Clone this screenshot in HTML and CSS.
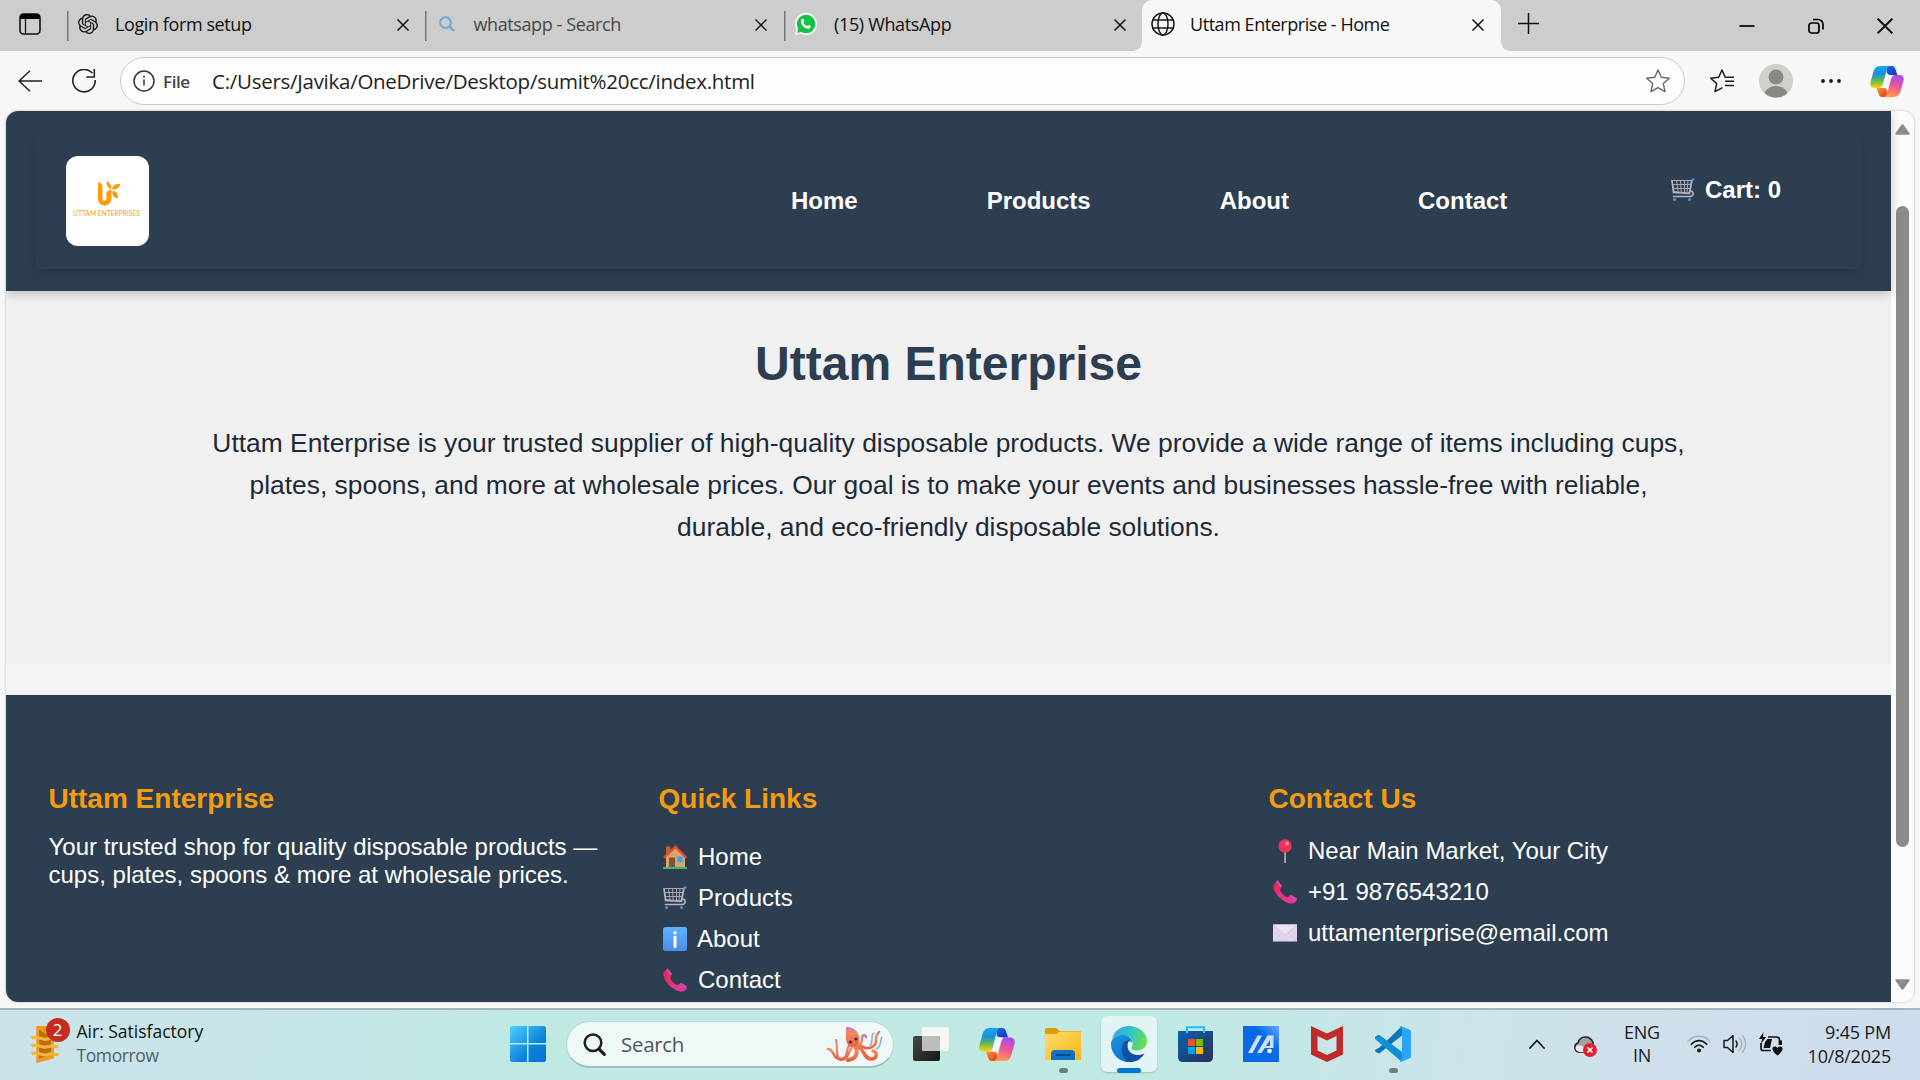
FILE: index.html
```html
<!DOCTYPE html>
<html lang="en">
<head>
<meta charset="utf-8">
<title>Uttam Enterprise - Home</title>
<link rel="stylesheet" href="styles.css">
</head>
<body>
<svg class="defs" width="0" height="0">
  <defs>
    <linearGradient id="cpBlue" x1="0" y1="0" x2="0" y2="1"><stop offset="0" stop-color="#1ba4f0"/><stop offset=".35" stop-color="#1a8fe0"/><stop offset=".65" stop-color="#5cb85c"/><stop offset="1" stop-color="#ffd500"/></linearGradient>
    <linearGradient id="cpPink" x1=".6" y1="0" x2=".3" y2="1"><stop offset="0" stop-color="#a64bf0"/><stop offset=".5" stop-color="#f2588f"/><stop offset="1" stop-color="#ffa34d"/></linearGradient>
    <linearGradient id="cpNavy" x1="0" y1="0" x2="1" y2="1"><stop offset="0" stop-color="#1b6fe0"/><stop offset="1" stop-color="#1230c0"/></linearGradient>
    <linearGradient id="cpRed" x1="0" y1="0" x2="1" y2="1"><stop offset="0" stop-color="#ff9a2e"/><stop offset="1" stop-color="#e0352b"/></linearGradient>
    <linearGradient id="win" x1="0" y1="0" x2="1" y2="1"><stop offset="0" stop-color="#4fd0ff"/><stop offset=".6" stop-color="#0f84dc"/><stop offset="1" stop-color="#0070d0"/></linearGradient>
    <linearGradient id="folder" x1="0" y1="0" x2="1" y2="1"><stop offset="0" stop-color="#ffdc70"/><stop offset="1" stop-color="#fbb612"/></linearGradient>
    <linearGradient id="edgeTop" x1="0" y1=".3" x2="1" y2=".6"><stop offset="0" stop-color="#2ea8e8"/><stop offset=".5" stop-color="#35c5c5"/><stop offset="1" stop-color="#6be04a"/></linearGradient>
    <linearGradient id="edgeLeft" x1="0" y1="0" x2=".6" y2="1"><stop offset="0" stop-color="#1797dd"/><stop offset="1" stop-color="#0a6fd0"/></linearGradient>
    <linearGradient id="store" x1="0" y1="0" x2="1" y2="1"><stop offset="0" stop-color="#0a63b5"/><stop offset="1" stop-color="#2a2f50"/></linearGradient>
    <linearGradient id="asus" x1="0" y1="1" x2="1" y2="0"><stop offset="0" stop-color="#0a6ae6"/><stop offset=".65" stop-color="#0a6ae6"/><stop offset="1" stop-color="#6aa8ff"/></linearGradient>
    <linearGradient id="tvDark" x1="0" y1="0" x2="1" y2="1"><stop offset="0" stop-color="#4a4a48"/><stop offset="1" stop-color="#161616"/></linearGradient>
    <linearGradient id="octo" x1="0" y1="0" x2="0" y2="1"><stop offset="0" stop-color="#c07bc0"/><stop offset=".3" stop-color="#f58a60"/><stop offset="1" stop-color="#e8603c"/></linearGradient>
    <linearGradient id="phoneFill" x1="0" y1="0" x2="1" y2="1"><stop offset="0" stop-color="#e8254a"/><stop offset="1" stop-color="#ea3cab"/></linearGradient>
    <linearGradient id="infoFill" x1="0" y1="0" x2="0" y2="1"><stop offset="0" stop-color="#5cb2ff"/><stop offset="1" stop-color="#4b8ee8"/></linearGradient>
    <symbol id="close" viewBox="0 0 12 12"><path d="M.5.5l11 11M11.500.5l-11 11" fill="none" stroke="#111" stroke-width="1.5"/></symbol>
    <symbol id="copilot" viewBox="0 0 36 33">
      <path d="M18 0h5c2.500 0 3.500 1.600 4.200 4l1.800 5.500h-7.500c-2.500 0-3.500-1.500-4-4z" fill="url(#cpNavy)"/>
      <path d="M18 33h-5c-2.500 0-3.500-1.600-4.200-4L7 23.500h7.500c2.500 0 3.500 1.500 4 4z" fill="url(#cpRed)"/>
      <path d="M11 0h11c-2.400 0-3.600 1.800-4.300 4.200l-4 15c-.8 2.600-2 4.300-4.700 4.300H5c-4 0-5.500-2.700-4.500-6.500l3.200-11.500C4.700 2 7 0 11 0z" fill="url(#cpBlue)"/>
      <path d="M25 33H14c2.400 0 3.600-1.800 4.300-4.200l4-15c.8-2.600 2-4.300 4.700-4.300H31c4 0 5.500 2.700 4.500 6.500l-3.200 11.500C31.300 31 29 33 25 33z" fill="url(#cpPink)"/>
      <path d="M16.400 9.500H24c-1.300.8-1.900 2.500-2.500 4.500l-2.700 9.500H12c1.300-.8 1.900-2.300 2.300-4z" fill="#f3f8fa"/>
    </symbol>
    <symbol id="cart" viewBox="0 0 24 24">
      <path d="M1.500 2.500h19M1 3l2 10.500L18.500 15M20.500 2.500L18 15M2 6.500h17.500M2.600 10.500H19M5.500 2.500l1.500 11M9.500 2.500l.7 11.300M13.500 2.500v11.700M17 2.500l-1 12" fill="none" stroke="#aaa7b2" stroke-width="1"/>
      <path d="M1 2.500l1.500 12 16 1L21 2M19 13c4-.5 4.500 5.500 0 5.500H2.500" fill="none" stroke="#b9b3c2" stroke-width="1.600" stroke-linecap="round"/>
      <path d="M21 1.500h2.500" stroke="#4b8fe0" stroke-width="2"/><circle cx="3.500" cy="21.500" r="1.500" fill="#4b8fe0"/><circle cx="18.500" cy="21.500" r="1.500" fill="#4b8fe0"/>
    </symbol>
    <symbol id="phone" viewBox="0 0 24 24">
      <path d="M.5 4.500L4.500.3 9 6c-.5 2-2.200 2.500-1.600 4.500 1 2.500 4 5.500 6.400 6.500 2 .4 2.500-1.200 4.400-2L23.700 18.500c.8 3-3 5.300-6.200 5C10 22.500-1 12 .5 4.500z" fill="url(#phoneFill)"/>
      <path d="M4.500.3L9 6l-1.500 1.500L3.200 1.800zM18.200 15l5.500 3.500-1.500 1.700-5.200-4.500z" fill="#b45bb5"/>
    </symbol>
  </defs>
</svg>

<div class="tabstrip">
  <div class="tab-actions">
    <svg width="22" height="22" viewBox="0 0 22 22"><rect x="1" y="1" width="20" height="20" rx="3.500" fill="none" stroke="#111" stroke-width="1.600"/><path d="M1 6V4a3 3 0 013-3h14a3 3 0 013 3v2z" fill="#000"/><path d="M6.500 6v15" stroke="#111" stroke-width="1.300"/></svg>
  </div>
  <div class="tab">
    <svg class="favicon" width="20" height="20" viewBox="0 0 24 24" fill="#111"><path d="M22.280 9.820a5.980 5.980 0 00-.52-4.910 6.050 6.050 0 00-6.510-2.900A6.070 6.070 0 004.980 4.180a5.980 5.980 0 00-4 2.900 6.050 6.050 0 00.74 7.100 5.980 5.980 0 00.51 4.910 6.050 6.050 0 006.510 2.900A5.980 5.980 0 0013.260 24a6.060 6.060 0 005.770-4.210 5.990 5.990 0 004-2.900 6.060 6.060 0 00-.75-7.070zm-9.020 12.610a4.480 4.480 0 01-2.880-1.040l.14-.08 4.780-2.760a.79.79 0 00.39-.68v-6.740l2.020 1.170.04.05v5.580a4.500 4.500 0 01-4.490 4.500zM3.600 18.300a4.470 4.470 0 01-.53-3.010l.14.080 4.780 2.760a.77.77 0 00.78 0l5.840-3.370v2.330l-.03.06L9.740 19.950A4.500 4.500 0 013.600 18.300zM2.340 7.900a4.480 4.480 0 012.370-1.980V11.600a.77.77 0 00.39.68l5.810 3.350-2.020 1.170h-.07l-4.830-2.790A4.500 4.500 0 012.340 7.900zm16.600 3.850l-5.840-3.400 2.020-1.160h.07l4.830 2.790a4.490 4.490 0 01-.68 8.100v-5.670a.79.79 0 00-.4-.66zm2.010-3.020l-.14-.09-4.770-2.780a.78.78 0 00-.79 0L9.410 9.230V6.900l.03-.06 4.830-2.790a4.500 4.500 0 016.680 4.660zM8.310 12.860l-2.020-1.160-.04-.06V6.070a4.500 4.500 0 017.380-3.450l-.14.08-4.780 2.760a.79.79 0 00-.39.68zm1.100-2.370l2.600-1.500 2.610 1.500v3l-2.600 1.500-2.610-1.500z"/></svg>
    <span class="tab-title t1">Login form setup</span>
    <svg class="tab-close" width="12" height="12"><use href="#close"/></svg>
  </div>
  <div class="tab dim">
    <svg class="favicon" width="20" height="20" viewBox="0 0 20 20"><circle cx="8.500" cy="8.500" r="5.300" fill="none" stroke="#7ba8d4" stroke-width="2.300"/><path d="M12.200 12.200l5 5" stroke="#7ba8d4" stroke-width="2.600"/></svg>
    <span class="tab-title t2">whatsapp - Search</span>
    <svg class="tab-close" width="12" height="12"><use href="#close"/></svg>
  </div>
  <div class="tab">
    <svg class="favicon" width="22" height="22" viewBox="0 0 22 22"><path d="M0 22l1.500-5.800A10.900 10.900 0 1111 21.800a11 11 0 01-5.200-1.300z" fill="#fff"/><path d="M2 20l1.200-4.300A9.200 9.200 0 1111 20.200a9 9 0 01-4.700-1.300z" fill="#13c144"/><path d="M7.200 5.800c.7-.4 1.300 0 1.500.6l.7 1.700c.2.700-.9 1.300-.7 1.800.6 1.400 1.800 2.500 3.200 3 .6.200 1.100-1.200 1.700-1l1.900.9c.5.300.4 1.500-.2 2.100-1 .9-2.200 1-3.400.6-2.700-.8-5-3-5.800-5.500-.4-1.500-.2-3.300 1.100-4.200z" fill="#fff"/></svg>
    <span class="tab-title t3">(15) WhatsApp</span>
    <svg class="tab-close" width="12" height="12"><use href="#close"/></svg>
  </div>
  <div class="tab active">
    <svg class="favicon" width="24" height="24" viewBox="0 0 24 24" fill="none" stroke="#1a1a1a" stroke-width="1.500"><circle cx="12" cy="12" r="11"/><ellipse cx="12" cy="12" rx="5" ry="11"/><path d="M2 8h20M2 16h20"/></svg>
    <span class="tab-title t4">Uttam Enterprise - Home</span>
    <svg class="tab-close" width="12" height="12"><use href="#close"/></svg>
  </div>
  <svg class="new-tab" width="21" height="21" viewBox="0 0 21 21"><path d="M10.500 0v21M0 10.500h21" stroke="#111" stroke-width="1.500"/></svg>
  <div class="window-controls">
    <svg width="16" height="16" viewBox="0 0 16 16"><path d="M.5 8h15" stroke="#000" stroke-width="1.700"/></svg>
    <svg width="16" height="16" viewBox="0 0 16 16" fill="none" stroke="#000" stroke-width="1.700"><rect x="1" y="5" width="10" height="10" rx="2.500"/><path d="M5 1.500h5A5 5 0 0115 6.500v5"/></svg>
    <svg width="16" height="16" viewBox="0 0 12 12"><use href="#close"/></svg>
  </div>
</div>

<div class="toolbar">
  <svg class="back" width="24" height="22" viewBox="0 0 24 22" fill="none" stroke="#222" stroke-width="1.500"><path d="M24 11H1M12 .7L1 11l11 10.300"/></svg>
  <svg class="reload" width="24" height="24" viewBox="0 0 24 24" fill="none" stroke="#222" stroke-width="1.600"><path d="M20.500 4.300A11.200 11.200 0 1023.200 11M22.300 0v8h-8"/></svg>
  <div class="address">
    <svg width="22" height="22" viewBox="0 0 22 22" fill="none" stroke="#333" stroke-width="1.500"><circle cx="11" cy="11" r="10"/><path d="M11 9.500v6"/><path d="M11 5.800v1.800" stroke-width="1.800"/></svg>
    <span class="scheme">File</span>
    <span class="url">C:/Users/Javika/OneDrive/Desktop/sumit%20cc/index.html</span>
    <svg width="24" height="24" viewBox="0 0 24 24" fill="none" stroke="#666" stroke-width="1.400" stroke-linejoin="round"><path d="M12 1l3.300 7.300 8 .9-6 5.400 1.700 8L12 18.700 5 22.600l1.700-8-6-5.400 8-.9z"/></svg>
  </div>
  <svg class="favorites" width="24" height="24" viewBox="0 0 24 24" fill="none" stroke="#1a1a1a" stroke-width="1.500" stroke-linejoin="round"><path d="M16 8.500l-.8-.2L12 1 8.700 8.300l-8 .9 6 5.400-1.700 8 7.500-3.900M15 12.200h9M16 8.200h8M15 16.500h9"/></svg>
  <svg class="avatar" width="34" height="34" viewBox="0 0 34 34"><clipPath id="avc"><circle cx="17" cy="17" r="16.500"/></clipPath><circle cx="17" cy="17" r="17" fill="#d2d0cd"/><g clip-path="url(#avc)" fill="#8b8785"><circle cx="17" cy="13" r="7.500"/><ellipse cx="17" cy="33" rx="12.500" ry="11"/></g></svg>
  <svg class="more" width="20" height="4" viewBox="0 0 20 4" fill="#1a1a1a"><circle cx="2" cy="2" r="1.900"/><circle cx="10" cy="2" r="1.900"/><circle cx="18" cy="2" r="1.900"/></svg>
  <svg class="copilot-btn" width="34" height="31"><use href="#copilot"/></svg>
</div>

<div class="viewport">
  <div class="page">
    <header class="site-header">
      <nav class="site-nav">
        <div class="logo">
          <svg width="24" height="25" viewBox="0 0 24 25" fill="#ff9a0b"><path d="M1 1.500c3 0 4.500 1.200 4.500 4V17c0 4 3.700 4 4 0v-5c.3-1.500 1.500-2.500 5-3.500V17c0 4.500-3 7.500-7 7.500S.800 21.500.800 17z"/><path d="M10 0c3.500 2 5 5 4 8.500-3.500-2-5-5-4-8.500zM15 8.500C16 4 19 2.500 23.500 2.800 22.500 7 19.500 9 15 8.500zM15.500 10c4-.3 6 2.500 5.200 7.500-4-1-5.700-3.500-5.200-7.500z"/></svg>
          <span>UTTAM ENTERPRISES</span>
        </div>
        <ul class="menu">
          <li>Home</li><li>Products</li><li>About</li><li>Contact</li>
        </ul>
        <div class="cart"><svg width="24" height="24"><use href="#cart"/></svg><span>Cart: 0</span></div>
      </nav>
    </header>
    <section class="hero">
      <h1>Uttam Enterprise</h1>
      <p>Uttam Enterprise is your trusted supplier of high-quality disposable products. We provide a wide range of items including cups,<br>plates, spoons, and more at wholesale prices. Our goal is to make your events and businesses hassle-free with reliable,<br>durable, and eco-friendly disposable solutions.</p>
    </section>
    <footer class="site-footer">
      <div class="col">
        <h3>Uttam Enterprise</h3>
        <p>Your trusted shop for quality disposable products —<br>cups, plates, spoons &amp; more at wholesale prices.</p>
      </div>
      <div class="col">
        <h3>Quick Links</h3>
        <ul class="links">
          <li><svg width="24" height="24" viewBox="0 0 24 24"><path d="M3 1.500h4.500V10H3z" fill="#b5673c"/><path d="M3 10.500L12.500 2 22 10.500V22.500H3z" fill="#dba36c"/><path d="M0 12L12.500 0 24 12l-1.500 1.500L12.500 3.600 1.800 13.500z" fill="#ea4a2d"/><path d="M6 12.500h6v10H6z" fill="#84503f"/><path d="M14.500 11.500h5v5.500h-5z" fill="#27a9ee"/><path d="M0 22h24v2H0z" fill="#3fb968"/></svg>Home</li>
          <li><svg width="24" height="24"><use href="#cart"/></svg>Products</li>
          <li class="about"><svg width="24" height="24" viewBox="0 0 24 24"><rect width="24" height="24" rx="2.500" fill="url(#infoFill)"/><circle cx="12" cy="5.800" r="1.800" fill="#fff"/><path d="M12 10v9.500" stroke="#fff" stroke-width="3" stroke-linecap="round"/></svg>About</li>
          <li><svg width="24" height="24"><use href="#phone"/></svg>Contact</li>
        </ul>
      </div>
      <div class="col">
        <h3>Contact Us</h3>
        <ul class="links contact">
          <li><svg width="24" height="24" viewBox="0 0 24 24"><path d="M11.200 12h1.800v12h-1.800z" fill="#a9a5b8"/><circle cx="12" cy="7" r="6.700" fill="#f0305f"/><circle cx="14" cy="4.500" r="2" fill="#ff8aa0"/></svg>Near Main Market, Your City</li>
          <li><svg width="24" height="24"><use href="#phone"/></svg>+91 9876543210</li>
          <li><svg width="24" height="24" viewBox="0 0 24 24"><path d="M0 3.500h24v17H0z" fill="#e2d2ee"/><path d="M0 3.500h24L12 14z" fill="#ece4f2"/><path d="M0 3.500L12 14 24 3.500M0 20.500L9 11.500M24 20.500l-9-9" fill="none" stroke="#d3c2e0" stroke-width=".8"/></svg>uttamenterprise@email.com</li>
        </ul>
      </div>
    </footer>
  </div>
  <div class="scrollbar">
    <svg width="15" height="11" viewBox="0 0 15 11"><path d="M7.500 1.200L13.700 9.800H1.300z" fill="#8b8b8b" stroke="#8b8b8b" stroke-width="2" stroke-linejoin="round"/></svg>
    <div class="thumb"></div>
    <svg width="15" height="11" viewBox="0 0 15 11"><path d="M7.500 9.800L13.700 1.200H1.300z" fill="#8b8b8b" stroke="#8b8b8b" stroke-width="2" stroke-linejoin="round"/></svg>
  </div>
</div>

<div class="taskbar">
  <div class="widgets">
    <div class="weather">
      <svg width="30" height="40" viewBox="0 0 30 40"><path d="M5 0h11l8 8v27L5 40z" fill="#ef9a1a"/><path d="M8 4v31l13-4V12z" fill="#b96f0d"/><path d="M0 13c7-3 11 3 17 1s7 0 12 0M0 21.500c7-3 11 3 17 1s7 0 12 0M0 30c7-3 11 3 17 1s7 0 12 0" fill="none" stroke="#f5b53a" stroke-width="3.500"/></svg>
      <span class="badge">2</span>
    </div>
    <div class="two-line"><span class="w1">Air: Satisfactory</span><span class="w2">Tomorrow</span></div>
  </div>
  <div class="apps">
    <div class="app start"><svg width="36" height="36" viewBox="0 0 36 36"><path d="M1.500 0H17v17H0V1.500zM18.500 0H34.500L36 1.500V17H18.500zM0 18.500h17V36H1.500L0 34.500zM18.500 18.500H36v16L34.500 36h-16z" fill="url(#win)"/></svg></div>
    <div class="search">
      <svg width="23" height="23" viewBox="0 0 23 23" fill="none" stroke="#222" ><circle cx="10" cy="9.700" r="8.300" stroke-width="2.500"/><path d="M16 16l5.300 5.300" stroke-width="3.200" stroke-linecap="round"/></svg>
      <span>Search</span>
      <svg class="octopus" width="58" height="36" viewBox="0 0 58 36">
        <g fill="none" stroke="url(#octo)" stroke-linecap="round">
          <path d="M24 18C18 25 24 32 15 33 7 34 8 23 2 23" stroke-width="2.500"/><path d="M26 21C22 27 22 34 15 34 9 33 12 21 10 14" stroke-width="2"/>
          <path d="M30 21C32 28 30 33 22 34" stroke-width="4"/><path d="M32 21c6 2 6 13 14 12 6-1 5-8 1-8" stroke-width="3.500"/><path d="M33 18c8 8 18 3 17-5-.5-4 2-5 3-7" stroke-width="2.500"/>
          <path d="M31 19c6-2 5-4 5-7 0-3 4-4 4-1M29 22c8-3 9 8 13 9" stroke-width="2.500"/>
        </g>
        <path d="M50 23c6-2 4-10 6-12M44 20c4-4 0-11 4-13" stroke="#9fa4d6" stroke-width="1.600" fill="none"/>
        <path d="M20 1c5-.5 12 3 13 9 1 5-1 11-6 11-6 0-7-6-7-10z" fill="url(#octo)"/><circle cx="24.500" cy="16" r="1.600" fill="#3a2b4d"/><circle cx="30" cy="13" r="1.600" fill="#3a2b4d"/>
      </svg>
    </div>
    <div class="app"><svg width="36" height="34" viewBox="0 0 36 34"><rect y="9" width="27" height="25" rx="2" fill="url(#tvDark)"/><rect x="9" width="27" height="24" rx="2" fill="#f6f6f5"/><path d="M9 9h18v15H11a2 2 0 01-2-2z" fill="#bdbdbd"/></svg></div>
    <div class="app"><svg width="36" height="33"><use href="#copilot"/></svg></div>
    <div class="app running"><svg width="36" height="32" viewBox="0 0 36 32"><path d="M0 1.500Q0 0 1.500 0h9.500l4 3h20q1 0 1 1v10H0z" fill="#dd9c06"/><path d="M0 6h11l4-2.500h21V32H0z" fill="url(#folder)"/><path d="M6 32v-6q0-4 4-4h16q4 0 4 4v6z" fill="#0f72c4"/><path d="M11.500 27h13" stroke="#0a4b88" stroke-width="2" stroke-linecap="round"/></svg></div>
    <div class="app current"><svg width="36" height="36" viewBox="0 0 36 36"><path d="M1 13C3 5 10 0 18 0c10 0 18 7 18 15 0 6-4.500 9.500-10 9.500-4 0-6-1.500-5.500-3 2.500-3 1.500-8.500-4-11C11 8 4 9 1 13z" fill="url(#edgeTop)"/><path d="M0 18C0 12 6 8.500 12 9c5 .4 9 3.500 9.500 8-1-1.500-3-2-4.500-1-3 2-3 8 0 11.500 3 4 8 6 12 5.500C26 35 22 36 18 36 8 36 0 28 0 18z" fill="url(#edgeLeft)"/><path d="M14 15c-5 5-4 15 2 21 7 1 14-2.500 17.500-8.500-3 1.500-7.500 2.500-12 .3C16 25 15.500 19 18 14z" fill="#10529f"/></svg></div>
    <div class="app"><svg width="35" height="36" viewBox="0 0 35 36"><path d="M9 7V1.300h17V7" fill="none" stroke="#1fc0f5" stroke-width="2"/><path d="M0 5h35v26q0 5-5 5H5q-5 0-5-5z" fill="url(#store)"/><path d="M9 7V5M26 7V5" stroke="#2bd0ff" stroke-width="2"/><path d="M10 13h7v7h-7z" fill="#f25022"/><path d="M18 13h7v7h-7z" fill="#7fba00"/><path d="M10 21h7v7h-7z" fill="#00a4ef"/><path d="M18 21h7v7h-7z" fill="#ffb900"/></svg></div>
    <div class="app"><svg width="36" height="36" viewBox="0 0 36 36"><path d="M0 0h36v36H0z" fill="url(#asus)"/><path d="M5 27L14.500 9.500H19L9.500 27zM14 27L24.500 9.500H30.500V22H27V14L18.500 27z" fill="#cfe0fb"/><path d="M20.500 21h7" stroke="#cfe0fb" stroke-width="2"/><circle cx="26.500" cy="25" r="2.300" fill="#fff"/></svg></div>
    <div class="app"><svg width="32" height="36" viewBox="0 0 32 36"><path d="M0 0l16 7.500L32 0v28.500L16 36 0 28.500zM6.500 10v14.500L16 29l9.500-4.500V10L16 14.500z" fill="#c02a2a" fill-rule="evenodd"/></svg></div>
    <div class="app running"><svg width="36" height="36" viewBox="0 0 36 36"><path d="M27 0L10 16.500 4 21.800 0 24v1l2.500 2 2 .2L27 9.500z" fill="#0a75b8"/><path d="M2.500 9L0 11v2L27 36V26L4.500 9z" fill="#128fd6"/><path d="M26 0l9 4q1 .5 1 1.500v25q0 1-1 1.500l-9 4c-1 .3-.8 0-.3-1l1.300-3V4l-1.300-3c-.5-1-.6-1.300.3-1z" fill="#27a7f3"/></svg></div>
  </div>
  <div class="tray">
    <svg class="chev" width="16" height="10" viewBox="0 0 16 10"><path d="M1 9l7-7.500L15 9" fill="none" stroke="#1a1a1a" stroke-width="1.800" stroke-linecap="round"/></svg>
    <svg class="cloud" width="24" height="21" viewBox="0 0 24 21"><path d="M5.500 16A4.700 4.700 0 015 7C6 2.500 9 1 12.500 1c3.500 0 6 2 7.500 5.500L20 16z" fill="#a2a2a2" stroke="#222" stroke-width="1.600"/><path d="M3 14c-2-5 4-7 10-1v3H6z" fill="#e8e8e8"/><circle cx="17" cy="14" r="7" fill="#e0222c"/><path d="M14.500 11.500l5 5M19.500 11.500l-5 5" stroke="#fff" stroke-width="1.700"/></svg>
    <div class="lang"><span>ENG</span><span>IN</span></div>
    <svg class="wifi" width="24" height="18" viewBox="0 0 24 18" fill="none" stroke-linecap="round"><path d="M1 6.500C7-.5 17-.5 23 6.500" stroke="#a3b2bd" stroke-width="1.400"/><path d="M4.300 9.300c4.500-5 11-5 15.400 0M7.700 12.300c2.600-3 6-3 8.600 0" stroke="#1a1a1a" stroke-width="1.700"/><circle cx="12" cy="15.500" r="2" fill="#1a1a1a"/></svg>
    <svg class="sound" width="24" height="20" viewBox="0 0 24 20" fill="none" stroke-linecap="round"><path d="M1 6.500h3.500L10 1.500v17l-5.500-5H1z" stroke="#1a1a1a" stroke-width="1.500" stroke-linejoin="round"/><path d="M13 7q2.200 3 0 6" stroke="#1a1a1a" stroke-width="1.500"/><path d="M16.500 4q4.500 6 0 12M19.500 1.500q6.500 8.500 0 17" stroke="#a3b2bd" stroke-width="1.400"/></svg>
    <svg class="battery" width="24" height="24" viewBox="0 0 24 24"><path d="M2 11v5.500q0 2 2 2h8M9 5h8.500q3 0 3 3v5" fill="none" stroke="#111" stroke-width="1.700"/><path d="M21 8.500h2v4.500h-2z" fill="#111"/><path d="M6 10l2.500-3H13l-2 9H4.500zM4.500 0L0 7h3l-1 5 5-7H4z" fill="#111"/><path d="M18.500 23.500c-7-5-5.500-9-2.800-9 1.300 0 2.300.6 2.800 1.600.5-1 1.500-1.600 2.800-1.600 2.700 0 4.200 4-2.800 9z" fill="#111"/></svg>
    <div class="clock"><span class="c1">9:45 PM</span><span class="c2">10/8/2025</span></div>
  </div>
</div>
</body>
</html>
```
FILE: styles.css
```css
* { box-sizing: border-box; margin: 0; padding: 0; }
ul { list-style: none; }
svg { display: block; flex: none; }
.defs { position: absolute; }

body {
  width: 1920px;
  height: 1080px;
  overflow: hidden;
  display: flex;
  flex-direction: column;
  background: #f7f7f7;
  font-family: "Open Sans", "Noto Sans", sans-serif;
  color: #111;
  white-space: nowrap;
}

/* browser tabs */
.tabstrip {
  height: 51px;
  flex: none;
  display: flex;
  align-items: center;
  background: #cdcdcd;
}
.tab-actions { width: 66.500px; padding: 0 0 3px 19px; }
.tab {
  width: 358.500px;
  height: 51px;
  display: flex;
  align-items: center;
  padding: 0 16.500px 3px 11.500px;
  background: linear-gradient(#777, #777) 0 11px / 1.500px 30px no-repeat;
}
.favicon { margin-right: 17px; }
.dim .tab-title { color: #484848; }
.tab-title { font-size: 18px; line-height: 24px; flex: 1; }
.tab-close { margin-top: 2px; }
.tab.active {
  position: relative;
  background: #f7f7f7;
  border-radius: 10px 10px 0 0;
  padding-left: 9px;
}
.tab.active .favicon { margin-right: 15px; }
.tab.active::before, .tab.active::after {
  content: "";
  position: absolute;
  bottom: 0;
  width: 9px;
  height: 9px;
}
.tab.active::before { left: -9px; background: radial-gradient(circle at 0 0, #cdcdcd 8.500px, #f7f7f7 9px); }
.tab.active::after { right: -9px; background: radial-gradient(circle at 100% 0, #cdcdcd 8.500px, #f7f7f7 9px); }
.new-tab { margin: 0 auto 4px 17px; }
.window-controls { display: flex; gap: 53px; padding-right: 27px; }

.t1 { letter-spacing: -.4px; }
.t2 { letter-spacing: -.4px; }
.t3 { letter-spacing: -.35px; }
.t4 { letter-spacing: -.45px; }

/* browser toolbar */
.toolbar {
  height: 60px;
  flex: none;
  display: flex;
  align-items: center;
  padding: 0 15px 0 18px;
}
.reload { margin-left: 30px; }
.address {
  width: 1565px;
  height: 48px;
  margin-left: 24px;
  display: flex;
  align-items: center;
  padding: 0 14px 0 12px;
  border: 1.500px solid #cacaca;
  border-radius: 24px;
  background: #fdfdfd;
}
.scheme { width: 49px; padding-left: 8px; font-size: 17px; font-weight: 600; letter-spacing: -.4px; color: #444; }
.url { flex: 1; padding-left: 8px; font-size: 20.500px; letter-spacing: -.27px; color: #222; }
.favorites { margin-left: 25px; }
.avatar { margin-left: 25px; }
.more { margin-left: 28px; }
.copilot-btn { margin-left: 29px; }

/* page viewport */
.viewport {
  width: 1908px;
  height: 891px;
  flex: none;
  margin-left: 6px;
  display: flex;
  border-radius: 12px;
  overflow: hidden;
  box-shadow: 0 0 2px 1px rgba(0, 0, 0, .12);
}
.page { width: 1885px; font-family: "Liberation Sans", Arial, sans-serif; background: #f4f4f4; }
.site-header {
  position: relative;
  height: 180px;
  padding: 22px 30px;
  background: #2c3e50;
  box-shadow: 0 3px 10px rgba(0, 0, 0, .2);
}
.site-nav {
  height: 136px;
  display: flex;
  align-items: center;
  padding: 0 79px 0 30px;
  background: #2c3e50;
  box-shadow: 0 5px 12px rgba(0, 0, 0, .12);
}
.logo {
  width: 83px;
  height: 90px;
  padding-top: 25px;
  display: flex;
  flex-direction: column;
  align-items: center;
  background: #fff;
  border-radius: 12px;
}
.logo svg { margin-left: 3px; }
.logo span { margin: 3px 2px 0 0; font: 6.700px/8px Lato, sans-serif; color: #f0a028; }
.menu {
  display: flex;
  gap: 129px;
  margin-left: 642px;
  font-size: 24px;
  font-weight: bold;
  color: #fff;
}
.cart {
  display: flex;
  align-items: center;
  gap: 10px;
  margin: 0 1px 22px auto;
  font-size: 24px;
  font-weight: bold;
  color: #fff;
}
.hero {
  height: 373px;
  padding-top: 45px;
  text-align: center;
  background: #f0f0f0;
}
.hero h1 { font-size: 48px; line-height: 56px; color: #2c3e50; }
.hero p { margin-top: 30px; font-size: 26.400px; line-height: 42px; color: #1c2a38; }
.site-footer {
  height: 307px;
  margin-top: 31px;
  padding: 88px 43px 0 42.500px;
  display: grid;
  grid-template-columns: 610px 610px 1fr;
  background: #2c3e50;
  color: #fff;
  font-size: 24px;
  line-height: 28px;
}
.site-footer h3 { font-size: 28px; line-height: 32px; color: #f39c12; }
.site-footer .col > p { margin-top: 18px; }
.links { margin-top: 21px; }
.links li { height: 41px; display: flex; align-items: center; }
.links svg { margin: 0 11px 0 4.500px; }
.links .about svg { margin-right: 10px; }
.links.contact { margin-top: 15px; }
.links.contact svg { margin-left: 4px; margin-right: 11.500px; }

.scrollbar {
  flex: 1;
  background: #fcfcfc;
  display: flex;
  flex-direction: column;
  align-items: center;
  padding-top: 13px;
}
.thumb { width: 13px; height: 641px; margin: 71px 0 132px; border-radius: 7px; background: #8b8b8b; }

/* taskbar */
.taskbar {
  height: 72px;
  flex: none;
  margin-top: 6px;
  display: flex;
  align-items: flex-start;
  border-top: 2px solid #a4b5b9;
  background: linear-gradient(100deg, #cbe3eb 0, #c6e5e8 15%, #c0e9e3 27%, #c0e9e4 60%, #cbe4ea 76%, #cfdfec 88%, #cddcee 100%);
}
.widgets { width: 494.500px; display: flex; padding: 16px 0 0 31px; }
.weather { position: relative; width: 45.500px; height: 40px; }
.weather svg { width: 29px; height: 37px; }
.badge {
  position: absolute;
  left: 14.500px;
  top: -8.500px;
  width: 24px;
  height: 24px;
  border-radius: 50%;
  background: #c52b20;
  color: #fff;
  font-size: 17px;
  line-height: 23px;
  text-align: center;
}
.two-line { display: flex; flex-direction: column; font-size: 17.500px; line-height: 24px; margin-top: -7px; }
.w1 { letter-spacing: 0; }
.w2 { letter-spacing: -.4px; color: #525f62; }
.apps { display: flex; align-items: flex-start; }
.app {
  position: relative;
  width: 66px;
  height: 68px;
  display: flex;
  align-items: center;
  justify-content: center;
}
.app > svg { position: relative; }
.search {
  width: 328px;
  height: 47px;
  margin: 11px 4px 0 5.500px;
  display: flex;
  align-items: center;
  padding: 0 9px 0 16px;
  border: 1.500px solid #b5d8d3;
  border-bottom: 2px solid #9dc0bc;
  border-radius: 24px;
  background: #edf8f7;
}
.search span { flex: 1; padding-left: 15px; font-size: 20.500px; letter-spacing: -.3px; color: #555; }
.current::before {
  content: "";
  position: absolute;
  left: 5px;
  top: 6px;
  width: 56px;
  height: 56px;
  border-radius: 6px;
  background: #e2f4f3;
  box-shadow: 0 1px 2px rgba(0, 0, 0, .18);
}
.running::after, .current::after {
  content: "";
  position: absolute;
  top: 58px;
  width: 9px;
  height: 5px;
  border-radius: 3px;
  background: #6f7f7e;
}
.current::after { width: 24px; background: #0078d4; }
.tray { flex: 1; display: flex; align-items: center; height: 68px; padding-right: 29px; color: #1a1a1a; }
.chev { margin-left: 103px; }
.cloud { margin-left: 28px; margin-top: 4px; }
.lang { width: 60px; margin-left: 15px; display: flex; flex-direction: column; text-align: center; font-size: 18px; line-height: 22.500px; letter-spacing: -.2px; }
.lang, .clock { padding-bottom: 1px; }
.wifi { margin-left: 15px; }
.sound { margin-left: 12px; }
.battery { margin-left: 12px; }
.clock { margin-left: auto; display: flex; flex-direction: column; text-align: right; font-size: 18px; line-height: 24px; letter-spacing: -.2px; }
```
